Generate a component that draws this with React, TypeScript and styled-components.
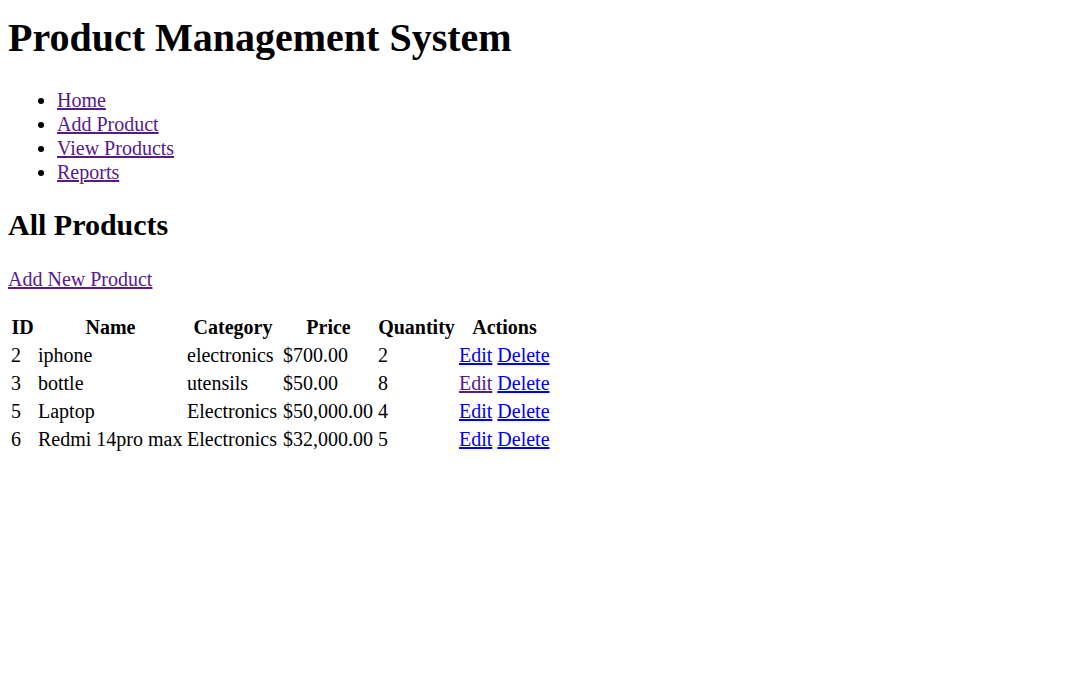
import React from "react";
import styled, { createGlobalStyle } from "styled-components";

const GlobalStyle = createGlobalStyle`
  html, body { background: #ffffff; }
  body {
    margin: 0 8px 8px;
    font-family: "Liberation Serif", "Times New Roman", serif;
    font-size: 20px;
    color: #000000;
  }
`;

const Title = styled.h1`
  font-size: 2em;
  font-weight: bold;
  margin: 14px 0 0.67em;
`;

const NavList = styled.ul`
  list-style: disc;
  margin: 1em 0;
  padding-left: 49px;
`;

const NavItem = styled.li`
  line-height: 24px;
`;

const Link = styled.a<{ $visited?: boolean }>`
  color: ${(p) => (p.$visited ? "#551a8b" : "#0000ee")};
  text-decoration: underline;
  cursor: pointer;
`;

const SectionTitle = styled.h2`
  font-size: 1.5em;
  font-weight: bold;
  margin: 24px 0 26px;
`;

const Paragraph = styled.p`
  margin: 20px 0 21px;
`;

const Table = styled.table`
  border-collapse: separate;
  border-spacing: 2px;
`;

const HeadCell = styled.th<{ $w?: number }>`
  padding: 1px;
  font-weight: bold;
  text-align: center;
  line-height: 24px;
  width: ${(p) => (p.$w ? `${p.$w}px` : "auto")};
`;

const Cell = styled.td`
  padding: 1px;
  text-align: left;
  line-height: 24px;
`;

type Product = {
  id: number;
  name: string;
  category: string;
  price: string;
  qty: number;
  editVisited?: boolean;
};

const products: Product[] = [
  { id: 2, name: "iphone", category: "electronics", price: "$700.00", qty: 2 },
  { id: 3, name: "bottle", category: "utensils", price: "$50.00", qty: 8, editVisited: true },
  { id: 5, name: "Laptop", category: "Electronics", price: "$50,000.00", qty: 4 },
  { id: 6, name: "Redmi 14pro max", category: "Electronics", price: "$32,000.00", qty: 5 },
];

export default function App() {
  return (
    <>
      <GlobalStyle />
      <Title>Product Management System</Title>
      <nav>
        <NavList>
          <NavItem><Link $visited>Home</Link></NavItem>
          <NavItem><Link $visited>Add Product</Link></NavItem>
          <NavItem><Link $visited>View Products</Link></NavItem>
          <NavItem><Link $visited>Reports</Link></NavItem>
        </NavList>
      </nav>
      <SectionTitle>All Products</SectionTitle>
      <Paragraph><Link $visited>Add New Product</Link></Paragraph>
      <Table>
        <thead>
          <tr>
            <HeadCell $w={23}>ID</HeadCell>
            <HeadCell $w={145}>Name</HeadCell>
            <HeadCell $w={92}>Category</HeadCell>
            <HeadCell $w={91}>Price</HeadCell>
            <HeadCell $w={77}>Quantity</HeadCell>
            <HeadCell $w={91}>Actions</HeadCell>
          </tr>
        </thead>
        <tbody>
          {products.map((p) => (
            <tr key={p.id}>
              <Cell>{p.id}</Cell>
              <Cell>{p.name}</Cell>
              <Cell>{p.category}</Cell>
              <Cell>{p.price}</Cell>
              <Cell>{p.qty}</Cell>
              <Cell>
                <Link $visited={p.editVisited}>Edit</Link>{" "}
                <Link>Delete</Link>
              </Cell>
            </tr>
          ))}
        </tbody>
      </Table>
    </>
  );
}
